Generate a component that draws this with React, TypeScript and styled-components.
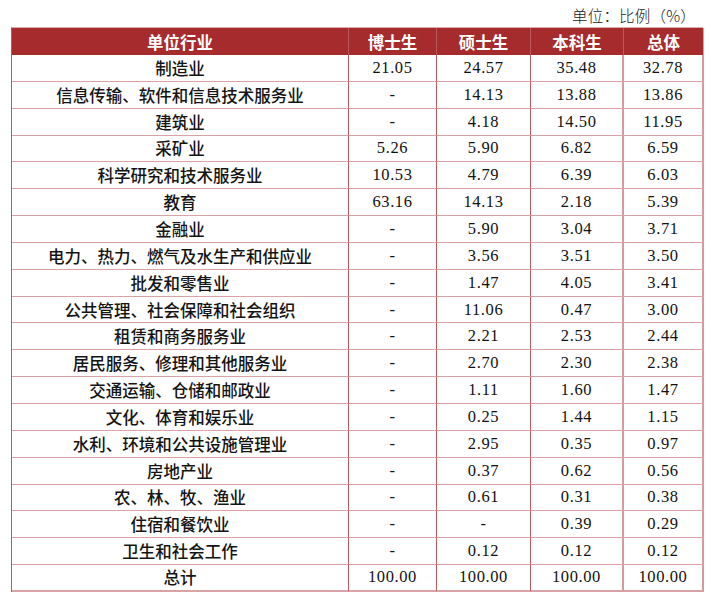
import React from 'react';
import styled, { createGlobalStyle } from 'styled-components';

const GlobalStyle = createGlobalStyle`
  html, body {
    margin: 0;
    padding: 0;
    background: #ffffff;
  }
  body {
    font-family: "Noto Sans CJK SC", "Noto Sans", sans-serif;
    color: #111111;
  }
`;

const Page = styled.div`
  width: 713px;
  height: 608px;
  padding: 0 10px 0 11px;
  box-sizing: border-box;
`;

const Unit = styled.div`
  height: 27px;
  display: flex;
  align-items: center;
  justify-content: flex-end;
  padding-right: 7px;
  padding-top: 2px;
  box-sizing: border-box;
  font-size: 15.5px;
  font-weight: 300;
  color: #222222;
  letter-spacing: 0.2px;
`;

const Table = styled.div`
  display: grid;
  grid-template-columns: 337px 88px 94px 93px 80px;
  grid-template-rows: 27px;
  grid-auto-rows: 26.85px;
  width: 692px;
  border-left: 1px solid #b9585d;
  border-top: 1px solid #dcaeb0;
  box-sizing: border-box;
`;

const HeadCell = styled.div<{ $last?: boolean }>`
  background: #a52b2c;
  color: #ffffff;
  font-weight: 700;
  font-size: 16.5px;
  display: flex;
  align-items: center;
  justify-content: center;
  border-right: 1px solid ${p => (p.$last ? '#d7a1a4' : '#b9585d')};
  box-sizing: border-box;
`;

const NameCell = styled.div<{ $last?: boolean }>`
  display: flex;
  align-items: center;
  justify-content: center;
  font-size: 16.5px;
  font-weight: 500;
  color: #141414;
  border-right: 1px solid #b9585d;
  border-bottom: ${p => (p.$last ? '2px' : '1.5px')} solid #d9a3a6;
  box-sizing: border-box;
  white-space: nowrap;
`;

const NumCell = styled.div<{ $col: number; $last?: boolean }>`
  display: flex;
  align-items: center;
  justify-content: center;
  font-family: "Liberation Serif", "DejaVu Serif", serif;
  font-size: 16.5px;
  color: #111111;
  border-right: ${p => (p.$col >= 2 ? '2px solid #d69a9e' : '1px solid #b9585d')};
  border-bottom: ${p => (p.$last ? '2px' : '1.5px')} solid #d9a3a6;
  box-sizing: border-box;
  letter-spacing: 0.6px;
`;

type Row = [string, string, string, string, string];

const rows: Row[] = [
  ['制造业', '21.05', '24.57', '35.48', '32.78'],
  ['信息传输、软件和信息技术服务业', '-', '14.13', '13.88', '13.86'],
  ['建筑业', '-', '4.18', '14.50', '11.95'],
  ['采矿业', '5.26', '5.90', '6.82', '6.59'],
  ['科学研究和技术服务业', '10.53', '4.79', '6.39', '6.03'],
  ['教育', '63.16', '14.13', '2.18', '5.39'],
  ['金融业', '-', '5.90', '3.04', '3.71'],
  ['电力、热力、燃气及水生产和供应业', '-', '3.56', '3.51', '3.50'],
  ['批发和零售业', '-', '1.47', '4.05', '3.41'],
  ['公共管理、社会保障和社会组织', '-', '11.06', '0.47', '3.00'],
  ['租赁和商务服务业', '-', '2.21', '2.53', '2.44'],
  ['居民服务、修理和其他服务业', '-', '2.70', '2.30', '2.38'],
  ['交通运输、仓储和邮政业', '-', '1.11', '1.60', '1.47'],
  ['文化、体育和娱乐业', '-', '0.25', '1.44', '1.15'],
  ['水利、环境和公共设施管理业', '-', '2.95', '0.35', '0.97'],
  ['房地产业', '-', '0.37', '0.62', '0.56'],
  ['农、林、牧、渔业', '-', '0.61', '0.31', '0.38'],
  ['住宿和餐饮业', '-', '-', '0.39', '0.29'],
  ['卫生和社会工作', '-', '0.12', '0.12', '0.12'],
  ['总计', '100.00', '100.00', '100.00', '100.00'],
];

const headers = ['单位行业', '博士生', '硕士生', '本科生', '总体'];

export default function App() {
  return (
    <Page>
      <GlobalStyle />
      <Unit>单位：比例（%）</Unit>
      <Table>
        {headers.map((h, i) => (
          <HeadCell key={h} $last={i === headers.length - 1}>
            {h}
          </HeadCell>
        ))}
        {rows.map((r, ri) => {
          const last = ri === rows.length - 1;
          return (
            <React.Fragment key={r[0]}>
              <NameCell $last={last}>{r[0]}</NameCell>
              {r.slice(1).map((v, ci) => (
                <NumCell key={ci} $col={ci} $last={last}>
                  {v}
                </NumCell>
              ))}
            </React.Fragment>
          );
        })}
      </Table>
    </Page>
  );
}
